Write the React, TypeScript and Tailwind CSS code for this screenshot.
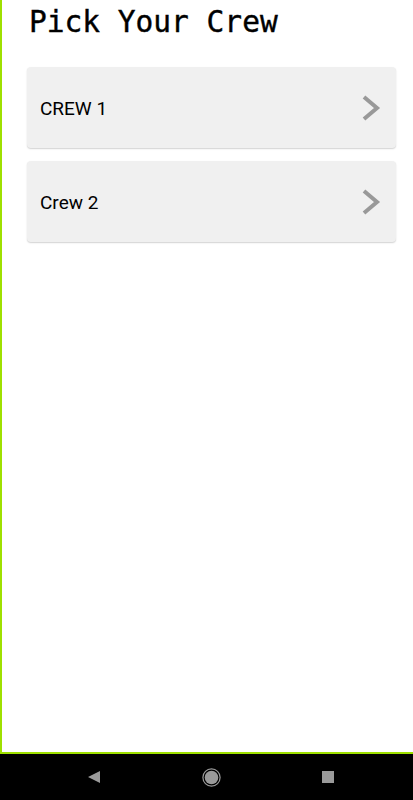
const crews = ["CREW 1", "Crew 2"];

export default function App() {
  return (
    <div className="w-[413px] h-[800px] flex flex-col bg-black overflow-hidden">
      <div className="flex-1 bg-white border-l-2 border-b-2 border-[#9ee000] flex flex-col">
        <h1 className="ml-[27px] mt-[2px] text-[29.5px] leading-[40px] text-black [-webkit-text-stroke:0.4px_black]" style={{ fontFamily: '"DejaVu Sans Mono", monospace' }}>
          Pick Your Crew
        </h1>
        <div className="flex flex-col gap-[13px] mt-[25px] ml-[25px] mr-[17px]">
          {crews.map((c) => (
            <div key={c} className="h-[81px] flex items-center justify-between pl-[13px] pr-[15px] bg-[#f0f0f0] rounded-[4px] shadow-[0_1px_1.5px_rgba(0,0,0,0.18)]">
              <span className="pt-[4px] text-[19px] text-black" style={{ fontFamily: "Roboto, sans-serif" }}>{c}</span>
              <svg width="20" height="28" viewBox="0 0 20 28">
                <polyline points="3,3 16,14 3,25" fill="none" stroke="#999999" strokeWidth="4" />
              </svg>
            </div>
          ))}
        </div>
      </div>
      <div className="h-[46px] shrink-0 flex items-center pl-[74px] gap-[77px]">
        <div className="w-[40px] flex justify-center">
          <svg width="12" height="12" viewBox="0 0 12 12"><polygon points="0,6 12,0 12,12" fill="#9a9a9a" /></svg>
        </div>
        <div className="w-[40px] flex justify-center">
          <svg width="19" height="19" viewBox="0 0 19 19"><circle cx="9.5" cy="9.5" r="8.6" fill="none" stroke="#9a9a9a" strokeWidth="1.2" /><circle cx="9.5" cy="9.5" r="6.8" fill="#9a9a9a" /></svg>
        </div>
        <div className="w-[40px] flex justify-center">
          <svg width="12" height="12" viewBox="0 0 12 12"><rect width="12" height="12" fill="#9a9a9a" /></svg>
        </div>
      </div>
    </div>
  );
}
